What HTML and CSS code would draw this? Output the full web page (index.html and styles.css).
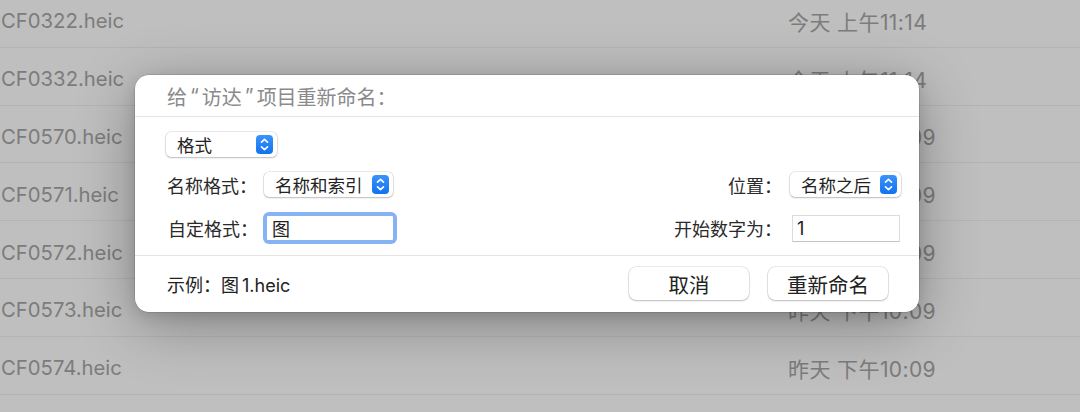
FILE: index.html
```html
<!DOCTYPE html>
<html lang="zh-CN">
<head>
<meta charset="utf-8">
<link rel="stylesheet" href="styles.css">
</head>
<body>
<div class="list">
  <div class="row"><span class="name">CF0322.heic</span><span class="date">今天 上午11:14</span></div>
  <div class="row"><span class="name">CF0332.heic</span><span class="date">今天 上午11:14</span></div>
  <div class="row"><span class="name">CF0570.heic</span><span class="date">昨天 下午10:09</span></div>
  <div class="row"><span class="name">CF0571.heic</span><span class="date">昨天 下午10:09</span></div>
  <div class="row"><span class="name">CF0572.heic</span><span class="date">昨天 下午10:09</span></div>
  <div class="row"><span class="name">CF0573.heic</span><span class="date">昨天 下午10:09</span></div>
  <div class="row"><span class="name">CF0574.heic</span><span class="date">昨天 下午10:09</span></div>
</div>

<div class="dialog">
  <div class="title">给<span class="q">“</span>访达<span class="q">”</span>项目重新命名：</div>
  <div class="body">
    <div class="popup w111 span2">
      <span class="ptext">格式</span>
      <span class="stepper"><svg width="17" height="19" viewBox="0 0 17 19"><path d="M5.5 7.2 L8.5 4.4 L11.5 7.2" fill="none" stroke="#fff" stroke-width="1.6" stroke-linecap="round" stroke-linejoin="round"/><path d="M5.5 11.8 L8.5 14.6 L11.5 11.8" fill="none" stroke="#fff" stroke-width="1.6" stroke-linecap="round" stroke-linejoin="round"/></svg></span>
    </div>
    <div class="spacer"></div>

    <div class="label">名称格式：</div>
    <div class="popup w129">
      <span class="ptext">名称和索引</span>
      <span class="stepper"><svg width="17" height="19" viewBox="0 0 17 19"><path d="M5.5 7.2 L8.5 4.4 L11.5 7.2" fill="none" stroke="#fff" stroke-width="1.6" stroke-linecap="round" stroke-linejoin="round"/><path d="M5.5 11.8 L8.5 14.6 L11.5 11.8" fill="none" stroke="#fff" stroke-width="1.6" stroke-linecap="round" stroke-linejoin="round"/></svg></span>
    </div>
    <div class="rlabel">位置：</div>
    <div class="popup w111">
      <span class="ptext">名称之后</span>
      <span class="stepper"><svg width="17" height="19" viewBox="0 0 17 19"><path d="M5.5 7.2 L8.5 4.4 L11.5 7.2" fill="none" stroke="#fff" stroke-width="1.6" stroke-linecap="round" stroke-linejoin="round"/><path d="M5.5 11.8 L8.5 14.6 L11.5 11.8" fill="none" stroke="#fff" stroke-width="1.6" stroke-linecap="round" stroke-linejoin="round"/></svg></span>
    </div>

    <div class="label l3">自定格式：</div>
    <div class="focus"><div class="field">图</div></div>
    <div class="rlabel">开始数字为：</div>
    <div class="field plain">1</div>
  </div>
  <div class="footer">
    <div class="example">示例：图<span class="gap">1.heic</span></div>
    <div class="buttons">
      <div class="btn">取消</div>
      <div class="btn">重新命名</div>
    </div>
  </div>
</div>
</body>
</html>
```

FILE: styles.css
```css
* { box-sizing: border-box; }
html, body { margin: 0; padding: 0; }
body {
  width: 1080px;
  height: 412px;
  overflow: hidden;
  background: #bfbfbf;
  font-family: "Inter", "Noto Sans CJK SC", sans-serif;
  position: relative;
}
.list {
  margin-top: -10px;
}
.row {
  height: 57.8px;
  border-bottom: 1px solid #b4b4b4;
  display: flex;
  align-items: center;
  position: relative;
  font-size: 20px;
  color: #7c7c7c;
}
.name { margin-left: 1px; padding-top: 5px; font-size: 20.3px; }
.date {
  position: absolute;
  left: 788px;
  top: 0;
  bottom: 0;
  display: flex;
  align-items: center;
  padding-top: 5px;
  font-size: 21px;
  letter-spacing: 0.4px;
}

.dialog {
  position: absolute;
  left: 135px;
  top: 75px;
  width: 784px;
  height: 237px;
  background: #fff;
  border-radius: 14px;
  box-shadow: 0 0 0 0.5px rgba(0,0,0,0.2), 0 12px 60px rgba(0,0,0,0.32), 0 4px 14px rgba(0,0,0,0.12);
  display: flex;
  flex-direction: column;
  font-family: "Inter", "Noto Sans CJK SC", sans-serif;
}
.title {
  height: 42px;
  border-bottom: 1px solid #e4e4e4;
  padding-left: 32px;
  font-size: 20px;
  color: #8a8a8a;
  display: flex;
  align-items: center;
  padding-top: 1px;
}
.q { padding: 0 3px; }
.body {
  display: grid;
  grid-template-columns: 98px 1fr auto 111px;
  grid-template-rows: 25px 25px 32px;
  row-gap: 15px;
  padding: 15px 18px 0 31px;
  height: 139px;
  border-bottom: 1px solid #e4e4e4;
  align-items: center;
}
.span2 { grid-column: 1 / 3; }
.spacer { grid-column: 3 / 5; }
.label {
  font-size: 18px;
  color: #2a2a2a;
  padding-left: 1px;
}
.l3 { padding-left: 2px; }
.rlabel {
  font-size: 18px;
  color: #2a2a2a;
  padding-right: 8px;
  text-align: right;
}
.popup {
  height: 25px;
  background: #fff;
  border-radius: 5px;
  box-shadow: 0 0 0 0.5px rgba(0,0,0,0.16), 0 1px 2px rgba(0,0,0,0.2);
  display: flex;
  align-items: center;
  justify-content: space-between;
  padding: 0 4px 0 11px;
  font-size: 17.5px;
  color: #222;
  justify-self: start;
}
.w111 { width: 111px; }
.w129 { width: 129px; }
.stepper {
  width: 17px;
  height: 19px;
  border-radius: 4px;
  background: linear-gradient(#3b93fb, #1273f0);
  display: flex;
  flex-shrink: 0;
}
.focus {
  justify-self: start;
  width: 134px;
  height: 32px;
  padding: 4px;
  border-radius: 6px;
  background: #85b3f4;
  margin-left: -1px;
}
.field {
  height: 24px;
  background: #fff;
  font-size: 18px;
  color: #222;
  padding-left: 5px;
  display: flex;
  align-items: center;
  border-radius: 1px;
}
.plain {
  width: 108px;
  height: 27px;
  margin-left: 2px;
  border: 1px solid #dcdcdc;
  border-bottom-color: #c4c4c4;
  padding-left: 4px;
}
.footer {
  flex: 1;
  display: flex;
  align-items: center;
  justify-content: space-between;
  padding: 0 31px 0 32px;
}
.example {
  font-size: 18px;
  color: #222;
}
.gap { margin-left: 3px; }
.buttons {
  display: flex;
  gap: 19px;
}
.btn {
  width: 120px;
  height: 33px;
  border-radius: 7px;
  background: #fff;
  box-shadow: 0 0 0 0.5px rgba(0,0,0,0.16), 0 1px 2px rgba(0,0,0,0.2);
  font-size: 20.5px;
  color: #222;
  display: flex;
  align-items: center;
  justify-content: center;
  margin-top: -1px;
}
```
